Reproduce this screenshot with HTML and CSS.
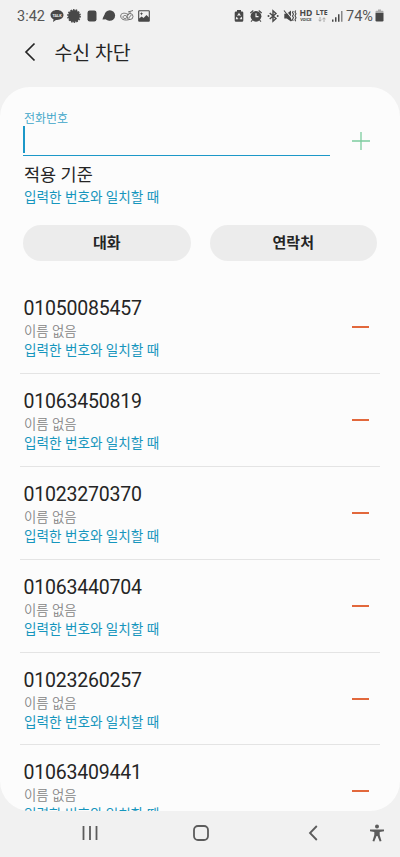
FILE: index.html
```html
<!DOCTYPE html>
<html lang="ko">
<head>
  <meta charset="UTF-8">
  <meta name="viewport" content="width=device-width, initial-scale=1.0">
  <title>수신 차단</title>
  <link rel="stylesheet" href="styles.css">
</head>
<body>
  <div class="status">
    <span class="time">3:42</span>
    <div class="icons">
      <svg viewBox="0 0 14 14"><path d="M7 1C3.300 1 .5 3.200.5 6.100c0 1.900 1.200 3.300 3 4.200L3 13l3-2.100h1c3.700 0 6.500-2 6.500-4.800S10.700 1 7 1z"/><text class="talk" x="7" y="7.500">TALK</text></svg>
      <svg viewBox="0 0 14 14"><circle cx="7" cy="7" r="5.900"/><circle class="teeth" cx="7" cy="7" r="6.100"/></svg>
      <svg viewBox="0 0 14 14"><rect x="2.500" y="1.500" width="9" height="11" rx="2.200"/></svg>
      <svg viewBox="0 0 14 14"><circle cx="7.800" cy="6.500" r="5.300"/><path d="M.5 10.500C1 8 2 6 4 4.500l4 7-3-1.300z"/></svg>
      <svg viewBox="0 0 14 14"><g class="line"><path d="M1 5.500c2-2 5-1.500 8 .5M1 5.500c-.8 2 0 4 2 5 2 .8 5 .7 7-.3M3 8c0-2 4-2 4 0s-4 2-4 0z"/><circle cx="10" cy="7.500" r="3"/><path d="M8 3l5-1.500M10 4.500V2.500M8.700 9l2.600-3"/></g></svg>
      <svg viewBox="0 0 14 14"><rect class="frame" x="1.700" y="1.700" width="10.600" height="10.600" rx=".6"/><path d="M2 12V9.500l2.700-2 1.800 1.500 3-3L12 8.500V12zM4.500 3l.5 1.200 1.200.5-1.200.5-.5 1.200L4 5.200l-1.200-.5L4 4.200z"/></svg>
    </div>
    <div class="icons right">
      <svg viewBox="0 0 14 14"><path d="M5 1h4v1.500h1q1.300 0 1.300 1.300v7.700q0 1.300-1.300 1.300H4q-1.300 0-1.300-1.300V3.800Q2.700 2.500 4 2.500h1z"/><path class="cut" d="M5.700 6.700L7 4.700l1.300 2M4.900 8l-.5 1.800h1.800M9.100 8l.5 1.800H7.800"/></svg>
      <svg viewBox="0 0 14 14"><circle cx="7" cy="7.300" r="5.400"/><path class="stroke" d="M1.300 4l3-2.500M12.700 4l-3-2.500M3.500 11l-1.500 1.700M10.500 11l1.500 1.700"/><path class="cut" d="M7 4.300v3.300h2.500"/></svg>
      <svg viewBox="0 0 14 14"><path class="bt" d="M3.700 4L10 9.600 7 12.300V1.700l3 2.700L3.700 10"/><circle cx="2.500" cy="7" r="1"/><circle cx="11.700" cy="7" r="1"/></svg>
      <svg viewBox="0 0 14 14"><path d="M1.300 4.700h2.500L8 1.500v11L3.800 9.400H1.300z"/><path class="slash" d="M2 1l7 8.500"/><path class="stroke" d="M1 1.500l8 10.500M10.300 2l-.8 1.500 1 1.600-1 1.800 1 1.800-1 1.600.8 1.500M12.700 1.500L12 3l1 1.700-1 2 1 2-1 2 .7 1.500"/></svg>
      <div class="mini hd"><b>HD</b><small>VOICE</small></div>
      <div class="mini lte"><b>LTE</b><svg viewBox="0 0 8 5"><path d="M2 0v4M.5 2.700L2 4.300l1.500-1.600M6 5V1M4.500 2.300L6 .7l1.500 1.600"/></svg></div>
      <svg viewBox="0 0 14 14"><path d="M1 10.500h1.500v2.300H1zM4 8.300h1.500v4.500H4zM7 5.300h1.500v7.500H7z"/><path class="weak" d="M10 2h1.500v10.800H10z"/></svg>
    </div>
    <span class="percent">74%</span>
    <svg class="battery" viewBox="0 0 9 13"><path class="empty" d="M3 .5h3v1.200h1.500q1 0 1 1V4h-8V2.700q0-1 1-1H3z"/><path d="M.5 4h8v7.300q0 1.200-1.200 1.200H1.700Q.5 12.500.5 11.300z"/></svg>
  </div>

  <div class="title">
    <svg viewBox="0 0 12 20"><path d="M10.500 1.500L2 10l8.500 8.500"/></svg>
    <h1>수신 차단</h1>
  </div>

  <div class="panel">
    <div class="form">
      <div class="field">
        <label>전화번호</label>
        <div class="input"><span class="caret"></span></div>
      </div>
      <svg class="add" viewBox="0 0 18 18"><path d="M9 0v18M0 9h18"/></svg>
    </div>
    <div class="rule">적용 기준</div>
    <div class="match">입력한 번호와 일치할 때</div>
    <div class="buttons">
      <button>대화</button>
      <button>연락처</button>
    </div>
    <div class="list">
      <div class="item">
        <div>
          <div class="num">01050085457</div>
          <div class="name">이름 없음</div>
          <div class="match">입력한 번호와 일치할 때</div>
        </div>
        <span class="minus"></span>
      </div>
      <div class="item">
        <div>
          <div class="num">01063450819</div>
          <div class="name">이름 없음</div>
          <div class="match">입력한 번호와 일치할 때</div>
        </div>
        <span class="minus"></span>
      </div>
      <div class="item">
        <div>
          <div class="num">01023270370</div>
          <div class="name">이름 없음</div>
          <div class="match">입력한 번호와 일치할 때</div>
        </div>
        <span class="minus"></span>
      </div>
      <div class="item">
        <div>
          <div class="num">01063440704</div>
          <div class="name">이름 없음</div>
          <div class="match">입력한 번호와 일치할 때</div>
        </div>
        <span class="minus"></span>
      </div>
      <div class="item">
        <div>
          <div class="num">01023260257</div>
          <div class="name">이름 없음</div>
          <div class="match">입력한 번호와 일치할 때</div>
        </div>
        <span class="minus"></span>
      </div>
      <div class="item">
        <div>
          <div class="num">01063409441</div>
          <div class="name">이름 없음</div>
          <div class="match">입력한 번호와 일치할 때</div>
        </div>
        <span class="minus"></span>
      </div>
    </div>
  </div>

  <div class="nav">
    <svg class="recent" viewBox="0 0 16 16"><path d="M1.500 1v14M8 1v14M14.500 1v14"/></svg>
    <svg class="home" viewBox="0 0 16 16"><rect x="1" y="1" width="14" height="14" rx="4"/></svg>
    <svg class="back" viewBox="0 0 10 16"><path d="M8.800 1L2 8l6.800 7"/></svg>
    <svg class="access" viewBox="0 0 16 18"><circle cx="8" cy="2.500" r="2"/><path d="M1 5.500h14v1.700l-4.300.7v3l1.800 6-1.800.6L8.500 12h-1l-2.200 5.500-1.800-.6 1.800-6v-3L1 7.200z"/></svg>
  </div>
</body>
</html>
```

FILE: styles.css
```css
* {
  box-sizing: border-box;
}
body {
  margin: 0;
  height: 857px;
  overflow: hidden;
  display: flex;
  flex-direction: column;
  background: #f1f1f1;
  color: #252525;
  font-family: Roboto, "Noto Sans CJK KR", sans-serif;
}
svg {
  display: block;
  flex: none;
}
.status {
  height: 31px;
  padding: 0 16px 0 17px;
  display: flex;
  align-items: center;
  color: #555;
}
.time {
  width: 33px;
  padding-top: 1px;
  font-size: 14.5px;
}
.icons {
  display: flex;
  align-items: center;
  gap: 3.4px;
}
.icons > svg {
  width: 14px;
  height: 14px;
  fill: #484848;
}
.right {
  margin-left: auto;
  gap: 2.8px;
}
.icons .talk {
  fill: #f1f1f1;
  font-size: 3.8px;
  font-weight: bold;
  text-anchor: middle;
}
.icons .teeth {
  fill: none;
  stroke: #484848;
  stroke-width: 1.6;
  stroke-dasharray: 1.6 1.1;
}
.line, .stroke, .frame {
  fill: none;
  stroke: #484848;
  stroke-width: 1.1;
}
.line {
  stroke: #666;
  stroke-width: 0.9;
}
.cut, .slash {
  fill: none;
  stroke: #f1f1f1;
  stroke-width: 1.1;
}
.bt {
  fill: none;
  stroke: #484848;
  stroke-width: 1.4;
}
.weak {
  fill: #888;
}
.mini {
  width: 13px;
  height: 14px;
  display: flex;
  flex-direction: column;
  align-items: center;
  color: #484848;
}
.mini b {
  font-family: "Open Sans", sans-serif;
  font-size: 8.6px;
  line-height: 8px;
}
.mini small {
  font-size: 4px;
  font-weight: bold;
  line-height: 6px;
}
.mini.lte b {
  font-size: 7px;
  line-height: 7px;
}
.lte svg {
  width: 8px;
  height: 5px;
  margin-top: 1px;
  fill: none;
  stroke: #999;
  stroke-width: 0.8;
}
.percent {
  margin-left: 1px;
  padding-top: 1px;
  width: 29px;
  font-size: 14.5px;
}
.battery {
  width: 9px;
  height: 13px;
  fill: #484848;
}
.empty {
  fill: #aaa;
}

.title {
  height: 56px;
  padding: 0 0 14px 24px;
  display: flex;
  align-items: center;
}
.title svg {
  width: 12px;
  height: 20px;
  fill: none;
  stroke: #252525;
  stroke-width: 1.7;
}
h1 {
  margin: -2px 0 0 18.5px;
  font-size: 19.4px;
  font-weight: 400;
}

.panel {
  height: 724px;
  overflow: hidden;
  padding: 23px 20px 0;
  border-radius: 30px;
  background: #fcfcfc;
}
.form {
  display: flex;
  padding-left: 3px;
}
.field {
  width: 307px;
}
label {
  display: block;
  padding: 1px 0 0 1px;
  font-size: 12px;
  line-height: 16px;
  font-weight: 350;
  color: #3ba5c8;
}
.input {
  height: 30px;
  margin-top: -1px;
  border-bottom: 1px solid #1c98c8;
}
.caret {
  display: block;
  width: 2px;
  height: 27px;
  background: #1c98c8;
}
.add {
  width: 18px;
  height: 18px;
  margin: 22px 0 0 22px;
  fill: none;
  stroke: #7ccc9e;
  stroke-width: 1.3;
}
.rule {
  margin-top: 7px;
  padding-left: 4px;
  font-size: 17.5px;
  line-height: 24px;
}
.match {
  padding-left: 4px;
  font-size: 13.6px;
  line-height: 20px;
  color: #1696bd;
}
.buttons {
  display: flex;
  gap: 19px;
  padding: 18px 3px 0;
}
button {
  flex: 1;
  height: 36px;
  padding: 0 0 3px;
  border: 0;
  border-radius: 18px;
  background: #ececec;
  color: #252525;
  font-family: inherit;
  font-size: 15px;
  font-weight: 700;
}
.list {
  margin-top: 20px;
}
.item {
  height: 92.9px;
  padding: 16px 11px 0 0;
  display: flex;
  justify-content: space-between;
  border-bottom: 1px solid #e4e4e4;
}
.num {
  padding-left: 3.5px;
  font-size: 19.5px;
  line-height: 23px;
  letter-spacing: -0.2px;
}
.name {
  padding: 3px 0 0 4px;
  font-size: 13.4px;
  line-height: 17px;
  font-weight: 350;
  color: #858585;
}
.minus {
  width: 17px;
  height: 2px;
  margin-top: 29px;
  background: #e2683c;
}

.nav {
  height: 44px;
  display: flex;
  align-items: center;
  fill: none;
  stroke: #5c5c5c;
  stroke-width: 1.8;
}
.recent {
  width: 16px;
  margin-left: 82px;
}
.home {
  width: 16px;
  margin-left: 95px;
}
.back {
  width: 10px;
  margin-left: 99px;
}
.access {
  width: 16px;
  margin-left: 51px;
  fill: #5c5c5c;
  stroke: none;
}
```
